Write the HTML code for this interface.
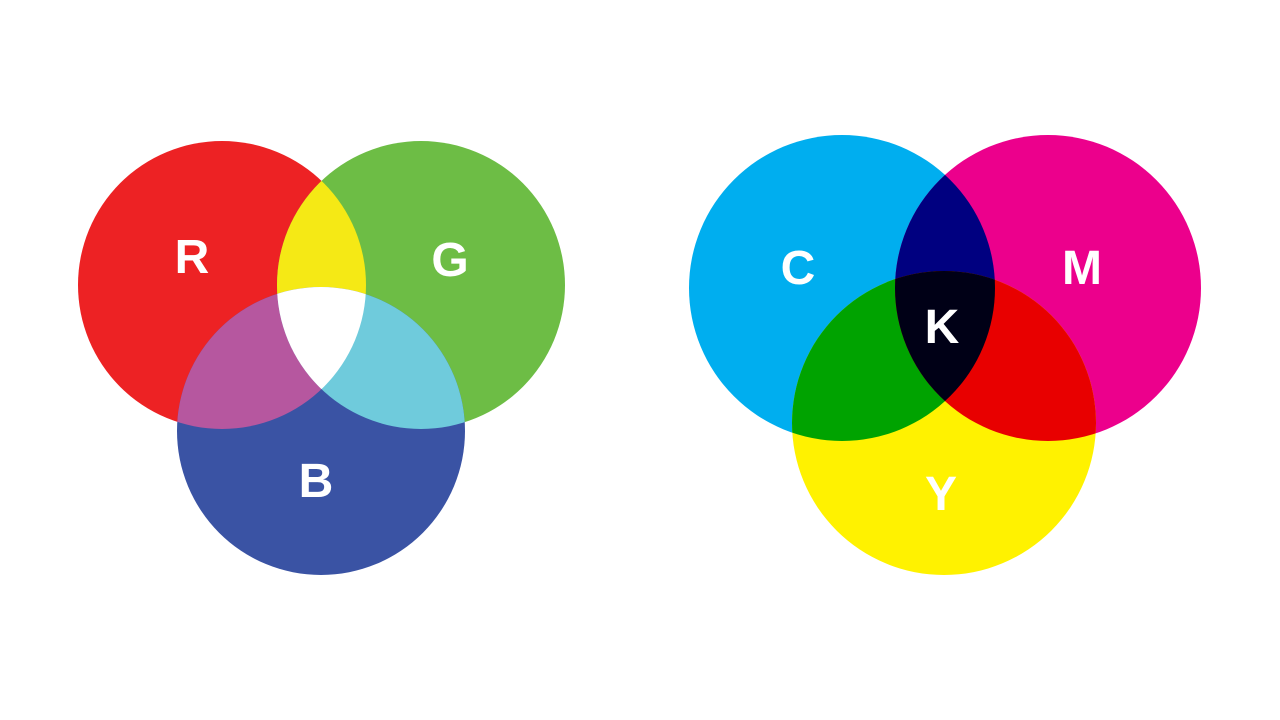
<!DOCTYPE html>
<html><head><meta charset="utf-8"><style>html,body{margin:0;padding:0;background:#fff;width:1280px;height:720px;overflow:hidden}</style></head>
<body>
<svg width="1280" height="720" xmlns="http://www.w3.org/2000/svg">
<defs>
<clipPath id="cr"><circle cx="222" cy="285" r="144"/></clipPath>
<clipPath id="cg"><circle cx="421" cy="285" r="144"/></clipPath>
<clipPath id="cb"><circle cx="321" cy="431" r="144"/></clipPath>
<clipPath id="cc"><circle cx="842" cy="288" r="153"/></clipPath>
<clipPath id="cm"><circle cx="1048" cy="288" r="153"/></clipPath>
<clipPath id="cy"><circle cx="944" cy="423" r="152"/></clipPath>
</defs>
<circle cx="222" cy="285" r="144" fill="#ed2224"/>
<circle cx="421" cy="285" r="144" fill="#6dbd45"/>
<circle cx="321" cy="431" r="144" fill="#3a53a4"/>
<circle cx="421" cy="285" r="144" fill="#f5e915" clip-path="url(#cr)"/>
<circle cx="321" cy="431" r="144" fill="#b6579f" clip-path="url(#cr)"/>
<circle cx="321" cy="431" r="144" fill="#6fcbdc" clip-path="url(#cg)"/>
<g clip-path="url(#cr)"><circle cx="321" cy="431" r="144" fill="#fff" clip-path="url(#cg)"/></g>

<circle cx="842" cy="288" r="153" fill="#00aeef"/>
<circle cx="1048" cy="288" r="153" fill="#ec008c"/>
<circle cx="944" cy="423" r="152" fill="#fff200"/>
<circle cx="1048" cy="288" r="153" fill="#000080" clip-path="url(#cc)"/>
<circle cx="944" cy="423" r="152" fill="#00a300" clip-path="url(#cc)"/>
<circle cx="944" cy="423" r="152" fill="#e80000" clip-path="url(#cm)"/>
<g clip-path="url(#cc)"><circle cx="944" cy="423" r="152" fill="#000016" clip-path="url(#cm)"/></g>

<g font-family="Liberation Sans, sans-serif" font-weight="bold" font-size="48" fill="#fff" text-anchor="middle">
<text x="192" y="273">R</text>
<text x="450" y="276">G</text>
<text x="316" y="497">B</text>
<text x="798" y="284">C</text>
<text x="1082" y="284">M</text>
<text x="942" y="343">K</text>
<text x="941" y="510">Y</text>
</g>
</svg>
</body></html>
